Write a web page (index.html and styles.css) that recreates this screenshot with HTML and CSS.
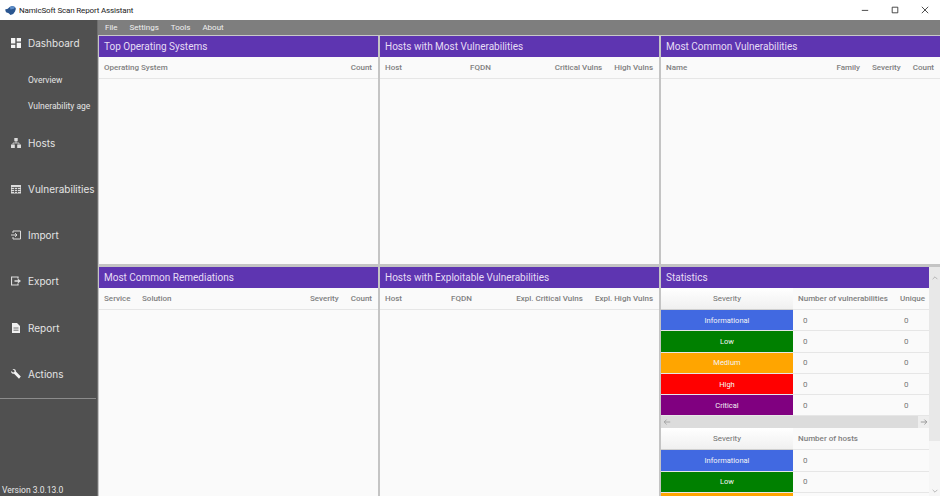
FILE: index.html
```html
<!DOCTYPE html>
<html lang="en">
<head>
    <meta charset="UTF-8">
    <title>NamicSoft Scan Report Assistant</title>
    <link rel="stylesheet" href="styles.css">
</head>
<body>
    <div class="titlebar">
        <svg class="app-logo" viewBox="0 0 12 10"><path d="M0 4 L3 3 L5 1 L8 0 L11 1 L12 3 L11 6 L9 9 L6 10 L4 8 L1 7 Z" fill="#2a5690"/><path d="M5 1 L8 0 L11 1 L10 3 L6 4 Z" fill="#5b8cc8"/></svg>
        <span class="app-name">NamicSoft Scan Report Assistant</span>
        <div class="win-buttons">
            <svg viewBox="0 0 10 10"><path d="M1 5.500H9" stroke="#222" fill="none"/></svg>
            <svg viewBox="0 0 10 10"><path d="M1.500 1.500H8.500V8.500H1.500Z" stroke="#222" fill="none"/></svg>
            <svg viewBox="0 0 10 10"><path d="M1 1L9 9M9 1L1 9" stroke="#222" fill="none"/></svg>
        </div>
    </div>

    <div class="app">
        <nav class="sidebar">
            <a class="nav-item">
                <svg class="nav-icon" viewBox="0 0 10 10"><path d="M0 0H4.300V5.500H0ZM5.700 0H10V3.500H5.700ZM0 6.800H4.300V10H0ZM5.700 4.800H10V10H5.700Z" fill="#f4f4f4"/></svg>
                Dashboard
            </a>
            <a class="sub-item">Overview</a>
            <a class="sub-item">Vulnerability age</a>
            <a class="nav-item">
                <svg class="nav-icon" viewBox="0 0 10 10"><path d="M3.300 0H6.700V3.200H3.300ZM0 6.400H3.800V10H0ZM6.200 6.400H10V10H6.200Z" fill="#dcdcdc"/><path d="M2 6.500V5H8V6.500M5 3V5" fill="none" stroke="#dcdcdc" stroke-width="0.8"/></svg>
                Hosts
            </a>
            <a class="nav-item">
                <svg class="nav-icon" viewBox="0 0 10 10"><path d="M0 1H10V9.500H0Z" fill="#dcdcdc"/><path d="M0.700 3.500H9.300M0.700 5.500H9.300M0.700 7.500H9.300M3.500 3.500V9M6.500 3.500V9" fill="none" stroke="#505050" stroke-width="0.8"/></svg>
                Vulnerabilities
            </a>
            <a class="nav-item">
                <svg class="nav-icon" viewBox="0 0 10 10"><path d="M2 3V1H9.500V9H2V7M0 5H5.500M4 3.200L6 5L4 6.800" fill="none" stroke="#dcdcdc"/></svg>
                Import
            </a>
            <a class="nav-item">
                <svg class="nav-icon" viewBox="0 0 10 10"><path d="M7 2.500V1H0.500V9H7V7.500" fill="none" stroke="#dcdcdc" stroke-width="1.200"/><path d="M3.500 4.200H6.800V2.500L10 5L6.800 7.500V5.800H3.500Z" fill="#dcdcdc"/></svg>
                Export
            </a>
            <a class="nav-item">
                <svg class="nav-icon" viewBox="0 0 10 10"><path d="M1 0H6L9 3V10H1Z" fill="#f0f0f0"/><path d="M2.500 5H7.500M2.500 7.200H7.500" stroke="#505050" stroke-width="0.8"/></svg>
                Report
            </a>
            <a class="nav-item">
                <svg class="nav-icon" viewBox="0 0 10 10"><path d="M0.300 2L2 3.500L3.500 3L3.300 1.300L1.500 0.200C3.200 -0.300 5 0.500 4.900 2.600L9.800 7.600L8 9.800L3.100 4.800C1.400 5 -0.200 3.800 0.300 2Z" fill="#f4f4f4"/></svg>
                Actions
            </a>
            <div class="nav-divider"></div>
            <div class="version">Version 3.0.13.0</div>
        </nav>

        <main class="content">
            <div class="menubar">
                <span>File</span>
                <span>Settings</span>
                <span>Tools</span>
                <span>About</span>
            </div>
            <div class="panels">
                <section class="panel">
                    <h2>Top Operating Systems</h2>
                    <div class="head-row">
                        <span class="grow">Operating System</span>
                        <span>Count</span>
                    </div>
                </section>
                <section class="panel">
                    <h2>Hosts with Most Vulnerabilities</h2>
                    <div class="head-row">
                        <span class="w85">Host</span>
                        <span class="grow">FQDN</span>
                        <span>Critical Vulns</span>
                        <span>High Vulns</span>
                    </div>
                </section>
                <section class="panel">
                    <h2>Most Common Vulnerabilities</h2>
                    <div class="head-row">
                        <span class="grow">Name</span>
                        <span>Family</span>
                        <span>Severity</span>
                        <span>Count</span>
                    </div>
                </section>
                <section class="panel">
                    <h2>Most Common Remediations</h2>
                    <div class="head-row">
                        <span class="w38">Service</span>
                        <span class="grow">Solution</span>
                        <span>Severity</span>
                        <span>Count</span>
                    </div>
                </section>
                <section class="panel">
                    <h2>Hosts with Exploitable Vulnerabilities</h2>
                    <div class="head-row">
                        <span class="w66">Host</span>
                        <span class="grow">FQDN</span>
                        <span>Expl. Critical Vulns</span>
                        <span>Expl. High Vulns</span>
                    </div>
                </section>
                <section class="panel stats">
                    <div class="stats-body">
                        <h2>Statistics</h2>
                        <table class="stats-table">
                            <tr><th class="sev-head">Severity</th><th class="num-head">Number of vulnerabilities</th><th class="uniq-head">Unique</th></tr>
                            <tr><td class="sev info">Informational</td><td>0</td><td>0</td></tr>
                            <tr><td class="sev low">Low</td><td>0</td><td>0</td></tr>
                            <tr><td class="sev medium">Medium</td><td>0</td><td>0</td></tr>
                            <tr><td class="sev high">High</td><td>0</td><td>0</td></tr>
                            <tr><td class="sev critical">Critical</td><td>0</td><td>0</td></tr>
                        </table>
                        <div class="hscroll">
                            <svg viewBox="0 0 10 10"><path d="M9 5H1.500M4.500 2L1.500 5L4.500 8" fill="none" stroke="#999"/></svg>
                            <div class="hscroll-right">
                                <svg viewBox="0 0 10 10"><path d="M1 5H8.500M5.500 2L8.500 5L5.500 8" fill="none" stroke="#888"/></svg>
                            </div>
                        </div>
                        <table class="stats-table">
                            <tr><th class="sev-head">Severity</th><th class="num-head wide">Number of hosts</th></tr>
                            <tr><td class="sev info">Informational</td><td>0</td></tr>
                            <tr><td class="sev low">Low</td><td>0</td></tr>
                            <tr><td class="sev medium"></td><td></td></tr>
                        </table>
                    </div>
                    <div class="vscroll">
                        <div class="vscroll-thumb">
                            <svg viewBox="0 0 10 10"><path d="M2 6.500L5 3.500L8 6.500" fill="none" stroke="#aaa"/></svg>
                        </div>
                        <svg class="vscroll-down" viewBox="0 0 10 10"><path d="M2 3.500L5 6.500L8 3.500" fill="none" stroke="#aaa"/></svg>
                    </div>
                </section>
            </div>
        </main>
    </div>
</body>
</html>
```

FILE: styles.css
```css
html, body {
    margin: 0;
    height: 496px;
    overflow: hidden;
}
body {
    font-family: Roboto, sans-serif;
    background-color: #ffffff;
}
.titlebar {
    display: flex;
    align-items: center;
    height: 20px;
    padding-left: 5px;
    background-color: #ffffff;
}
.app-logo {
    width: 11px;
    height: 9px;
}
.app-name {
    margin-left: 3px;
    font-size: 8px;
    letter-spacing: -0.15px;
    color: #222;
}
.win-buttons {
    display: flex;
    gap: 22px;
    margin-left: auto;
    margin-right: 11px;
}
.win-buttons svg {
    width: 8px;
    height: 8px;
}
.app {
    display: flex;
    height: 476px;
}
.sidebar {
    position: relative;
    flex: 0 0 97px;
    background-color: #505050;
    border-right: 1px solid #6e6e6e;
}
.nav-item {
    display: flex;
    align-items: center;
    height: 46.2px;
    padding-left: 11px;
    font-family: Inter, sans-serif;
    font-size: 10px;
    color: #e4e4e4;
}
.nav-icon {
    width: 10px;
    height: 10px;
    margin-right: 7px;
}
.sub-item {
    display: flex;
    align-items: center;
    height: 26.75px;
    padding-left: 28px;
    font-size: 8.5px;
    color: #e4e4e4;
}
.nav-divider {
    margin-top: 1px;
    height: 1px;
    background-color: #8c8c8c;
    margin-right: 1px;
}
.version {
    position: absolute;
    left: 2px;
    bottom: 1px;
    font-size: 8.5px;
    color: #e8e8e8;
}
.content {
    flex: 1;
    display: flex;
    flex-direction: column;
    min-width: 0;
    background-color: #c4c4c4;
    padding-left: 1px;
}
.menubar {
    display: flex;
    align-items: center;
    gap: 12px;
    height: 15px;
    margin-left: -1px;
    padding-left: 7px;
    background-color: #7e7e7e;
    border-bottom: 1px solid #c9c9c9;
    font-size: 8px;
    color: #f0f0f0;
}
.panels {
    flex: 1;
    display: grid;
    grid-template-columns: 279px 279px 279px;
    grid-template-rows: 228px 229px;
    column-gap: 2px;
    row-gap: 3px;
}
.panel {
    display: flex;
    flex-direction: column;
    background-color: #fafafa;
    overflow: hidden;
}
.panel h2 {
    margin: 0;
    height: 21px;
    padding-left: 5px;
    line-height: 21px;
    font-size: 10px;
    font-weight: 400;
    color: #e6ddf5;
    background-color: #5e35b1;
}
.head-row {
    display: flex;
    gap: 12px;
    align-items: center;
    height: 21px;
    padding: 0 6px 0 5px;
    border-bottom: 1px solid #e6e6e6;
    font-size: 8px;
    font-weight: 500;
    color: #808080;
    white-space: nowrap;
}
.grow {
    flex: 1;
}
.w85 {
    width: 73px;
}
.w66 {
    width: 54px;
}
.w38 {
    width: 26px;
}
.stats {
    flex-direction: row;
}
.stats-body {
    flex: 0 0 268px;
    width: 268px;
    overflow: hidden;
}
.stats-table {
    width: 268px;
    border-collapse: collapse;
    table-layout: fixed;
    font-size: 8px;
}
.stats-table th {
    height: 21px;
    padding: 0;
    font-weight: 500;
    color: #808080;
    border-bottom: 1px solid #e6e6e6;
    text-align: left;
    white-space: nowrap;
    background-color: #fafafa;
}
.stats-table .sev-head {
    width: 132px;
    text-align: center;
    color: #707070;
    font-weight: 400;
    background: linear-gradient(#ffffff, #f0f0f0);
    border-bottom: 1px solid #cfcfcf;
}
.stats-table .num-head {
    width: 100px;
    padding-left: 5px;
}
.stats-table .num-head.wide {
    width: auto;
}
.stats-table .uniq-head {
    padding-left: 2px;
}
.stats-table td {
    height: 20.3px;
    padding: 0 0 0 10px;
    color: #777;
    border-bottom: 1px solid #e6e6e6;
    background-color: #fafafa;
}
.stats-table td:last-child {
    padding-left: 6px;
}
.stats-table td:nth-child(2):last-child {
    padding-left: 10px;
}
.stats-table td.sev {
    padding: 0;
    text-align: center;
    font-size: 7.5px;
    color: #f4f4f4;
}
.stats-table td.info {
    background-color: #4169e1;
}
.stats-table td.low {
    background-color: #008000;
}
.stats-table td.medium {
    background-color: #ffa500;
}
.stats-table td.high {
    background-color: #ff0000;
}
.stats-table td.critical {
    background-color: #800080;
}
.hscroll {
    display: flex;
    align-items: center;
    height: 12px;
    background-color: #dcdcdc;
}
.hscroll svg {
    display: block;
    width: 8px;
    height: 8px;
    margin-left: 2px;
}
.hscroll-right {
    display: flex;
    align-items: center;
    height: 12px;
    width: 11px;
    margin-left: auto;
    background-color: #eeeeee;
}
.vscroll {
    position: relative;
    flex: 1;
    background-color: #f6f6f6;
}
.vscroll-thumb {
    height: 174px;
    background-color: #e8e8e8;
    text-align: center;
}
.vscroll svg {
    width: 8px;
    height: 8px;
}
.vscroll-down {
    position: absolute;
    left: 2px;
    bottom: 1px;
}
```
